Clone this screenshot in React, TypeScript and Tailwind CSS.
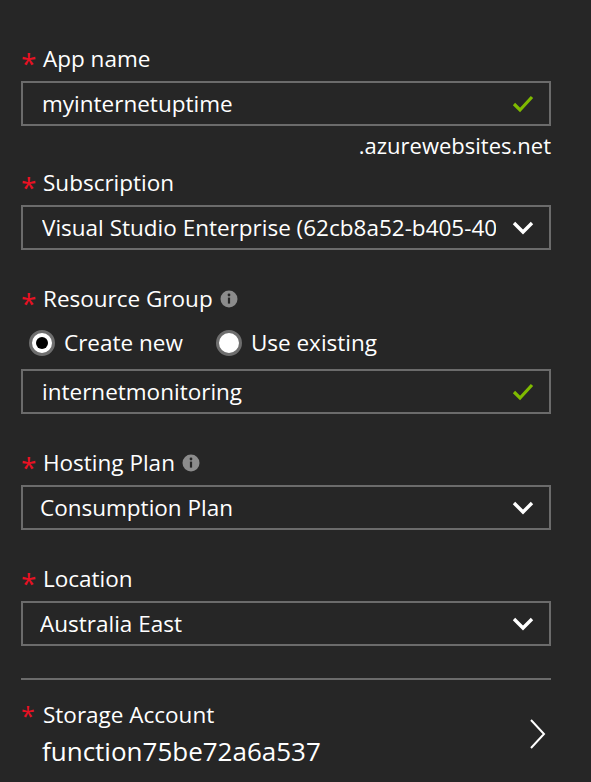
import React from "react";

const font = { fontFamily: '"Open Sans", "Noto Sans", sans-serif' };

function Star({ small }: { small?: boolean }) {
  return (
    <span
      className={
        "text-[#e81123] w-[22px] shrink-0 leading-none " +
        (small ? "text-[25px] mt-[3px]" : "text-[28px] mt-[5px]")
      }
    >
      *
    </span>
  );
}

function Info() {
  return (
    <svg width="18" height="18" viewBox="0 0 18 18" className="ml-[7px] shrink-0">
      <circle cx="9" cy="9" r="8.5" fill="#8c8c8c" />
      <rect x="7.9" y="7.6" width="2.2" height="6" fill="#262626" />
      <circle cx="9" cy="5" r="1.4" fill="#262626" />
    </svg>
  );
}

function Label({ text, info }: { text: string; info?: boolean }) {
  return (
    <div className="flex items-start h-[30px]">
      <Star />
      <span className="text-[22.5px] leading-[30px] text-white">{text}</span>
      {info && (
        <span className="h-[30px] flex items-center">
          <Info />
        </span>
      )}
    </div>
  );
}

function Check() {
  return (
    <svg width="22" height="18" viewBox="0 0 22 18" className="shrink-0">
      <path d="M2 9 L8 15 L20 2" stroke="#7fba00" strokeWidth="3.2" fill="none" />
    </svg>
  );
}

function ChevronDown() {
  return (
    <svg width="22" height="14" viewBox="0 0 22 14" className="shrink-0">
      <path d="M2 2 L11 11 L20 2" stroke="#ffffff" strokeWidth="3.4" fill="none" />
    </svg>
  );
}

function Box({ children, right, pl = "pl-[19px]" }: { children: React.ReactNode; right: React.ReactNode; pl?: string }) {
  return (
    <div className={"h-[45px] border-2 border-[#6b6b6b] flex items-center pr-[15px] " + pl}>
      <div className="flex-1 overflow-hidden whitespace-nowrap text-[22.5px] text-white leading-[30px]">{children}</div>
      <div className="ml-[16px] flex items-center">{right}</div>
    </div>
  );
}

function Radio({ checked }: { checked?: boolean }) {
  return (
    <span className="w-[26px] h-[26px] rounded-full bg-white border-[3px] border-[#6e6e6e] flex items-center justify-center shrink-0">
      {checked && <span className="w-[12px] h-[12px] rounded-full bg-black" />}
    </span>
  );
}

export default function App() {
  return (
    <div className="w-[591px] h-[782px] bg-[#262626] overflow-hidden" style={font}>
      <div className="pl-[21px] w-[551px] pt-[44px] flex flex-col">
        <Label text="App name" />
        <div className="mt-[7px]">
          <Box right={<Check />} pl="pl-[19px]">myinternetuptime</Box>
        </div>
        <div className="h-[30px] mt-[4px] text-right text-[22px] leading-[30px] text-white">.azurewebsites.net</div>
        <div className="mt-[8px]">
          <Label text="Subscription" />
        </div>
        <div className="mt-[7px]">
          <Box right={<ChevronDown />}>Visual Studio Enterprise (62cb8a52-b405-40</Box>
        </div>
        <div className="mt-[34px]">
          <Label text="Resource Group" info />
        </div>
        <div className="mt-[14px] h-[30px] flex items-center pl-[8px]">
          <Radio checked />
          <span className="ml-[9px] text-[22.5px] text-white">Create new</span>
          <span className="ml-[33px]"><Radio /></span>
          <span className="ml-[9px] text-[22.5px] text-white">Use existing</span>
        </div>
        <div className="mt-[11px]">
          <Box right={<Check />}>internetmonitoring</Box>
        </div>
        <div className="mt-[34px]">
          <Label text="Hosting Plan" info />
        </div>
        <div className="mt-[7px]">
          <Box right={<ChevronDown />} pl="pl-[17px]">Consumption Plan</Box>
        </div>
        <div className="mt-[34px]">
          <Label text="Location" />
        </div>
        <div className="mt-[7px]">
          <Box right={<ChevronDown />} pl="pl-[17px]">Australia East</Box>
        </div>
        <div className="mt-[32px] h-[2px] bg-[#6b6b6b]" />
        <div className="mt-[20px] flex items-start justify-between">
          <div className="flex flex-col">
            <div className="flex items-start h-[30px]">
              <Star small />
              <span className="text-[22.5px] leading-[30px] text-white">Storage Account</span>
            </div>
            <div className="pl-[21px] mt-[4px] text-[26px] leading-[34px] text-white">function75be72a6a537</div>
          </div>
          <svg width="18" height="32" viewBox="0 0 18 32" className="mr-[4px] mt-[18px]">
            <path d="M2 2 L15 16 L2 30" stroke="#ffffff" strokeWidth="2" fill="none" />
          </svg>
        </div>
      </div>
    </div>
  );
}
